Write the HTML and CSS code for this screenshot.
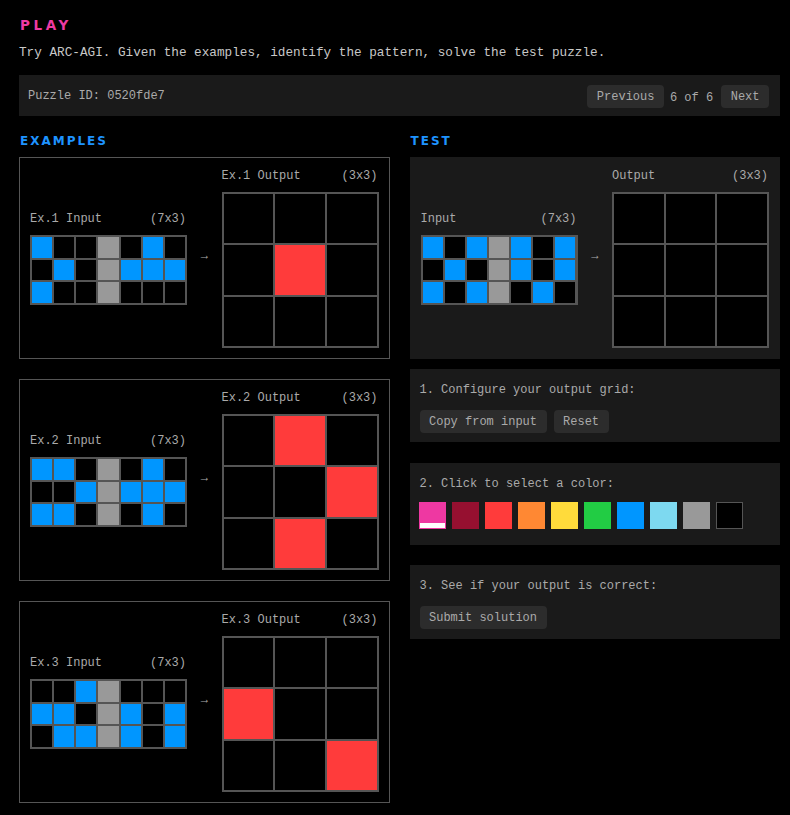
FILE: index.html
```html
<!DOCTYPE html>
<html>
<head>
<meta charset="utf-8">
<link rel="stylesheet" href="styles.css">
</head>
<body>
<div class="page">
  <h1 class="title">PLAY</h1>
  <p class="intro">Try ARC-AGI. Given the examples, identify the pattern, solve the test puzzle.</p>
  <div class="bar">
    <span class="pid">Puzzle ID: 0520fde7</span>
    <div class="nav">
      <button class="btn">Previous</button>
      <span class="count">6 of 6</span>
      <button class="btn">Next</button>
    </div>
  </div>
  <div class="cols">
    <section class="col">
      <h2 class="sec">EXAMPLES</h2>
      <div class="pair">
        <div class="block">
          <div class="lbl"><span>Ex.1 Input</span><span>(7x3)</span></div>
          <div class="grid g7">
            <i class="c1"></i><i></i><i></i><i class="c5"></i><i></i><i class="c1"></i><i></i>
            <i></i><i class="c1"></i><i></i><i class="c5"></i><i class="c1"></i><i class="c1"></i><i class="c1"></i>
            <i class="c1"></i><i></i><i></i><i class="c5"></i><i></i><i></i><i></i>
          </div>
        </div>
        <div class="arrow">→</div>
        <div class="block">
          <div class="lbl"><span>Ex.1 Output</span><span>(3x3)</span></div>
          <div class="grid g3">
            <i></i><i></i><i></i>
            <i></i><i class="c2"></i><i></i>
            <i></i><i></i><i></i>
          </div>
        </div>
      </div>
      <div class="pair">
        <div class="block">
          <div class="lbl"><span>Ex.2 Input</span><span>(7x3)</span></div>
          <div class="grid g7">
            <i class="c1"></i><i class="c1"></i><i></i><i class="c5"></i><i></i><i class="c1"></i><i></i>
            <i></i><i></i><i class="c1"></i><i class="c5"></i><i class="c1"></i><i class="c1"></i><i class="c1"></i>
            <i class="c1"></i><i class="c1"></i><i></i><i class="c5"></i><i></i><i class="c1"></i><i></i>
          </div>
        </div>
        <div class="arrow">→</div>
        <div class="block">
          <div class="lbl"><span>Ex.2 Output</span><span>(3x3)</span></div>
          <div class="grid g3">
            <i></i><i class="c2"></i><i></i>
            <i></i><i></i><i class="c2"></i>
            <i></i><i class="c2"></i><i></i>
          </div>
        </div>
      </div>
      <div class="pair">
        <div class="block">
          <div class="lbl"><span>Ex.3 Input</span><span>(7x3)</span></div>
          <div class="grid g7">
            <i></i><i></i><i class="c1"></i><i class="c5"></i><i></i><i></i><i></i>
            <i class="c1"></i><i class="c1"></i><i></i><i class="c5"></i><i class="c1"></i><i></i><i class="c1"></i>
            <i></i><i class="c1"></i><i class="c1"></i><i class="c5"></i><i class="c1"></i><i></i><i class="c1"></i>
          </div>
        </div>
        <div class="arrow">→</div>
        <div class="block">
          <div class="lbl"><span>Ex.3 Output</span><span>(3x3)</span></div>
          <div class="grid g3">
            <i></i><i></i><i></i>
            <i class="c2"></i><i></i><i></i>
            <i></i><i></i><i class="c2"></i>
          </div>
        </div>
      </div>
    </section>
    <section class="col">
      <h2 class="sec">TEST</h2>
      <div class="pair test">
        <div class="block">
          <div class="lbl"><span>Input</span><span>(7x3)</span></div>
          <div class="grid g7">
            <i class="c1"></i><i></i><i class="c1"></i><i class="c5"></i><i class="c1"></i><i></i><i class="c1"></i>
            <i></i><i class="c1"></i><i></i><i class="c5"></i><i class="c1"></i><i></i><i class="c1"></i>
            <i class="c1"></i><i></i><i class="c1"></i><i class="c5"></i><i></i><i class="c1"></i><i></i>
          </div>
        </div>
        <div class="arrow">→</div>
        <div class="block">
          <div class="lbl"><span>Output</span><span>(3x3)</span></div>
          <div class="grid g3">
            <i></i><i></i><i></i>
            <i></i><i></i><i></i>
            <i></i><i></i><i></i>
          </div>
        </div>
      </div>
      <div class="panel">
        <p class="step">1. Configure your output grid:</p>
        <div class="btns">
          <button class="btn">Copy from input</button>
          <button class="btn">Reset</button>
        </div>
      </div>
      <div class="panel p2">
        <p class="step">2. Click to select a color:</p>
        <div class="swatches">
          <span class="sw s6 sel"></span>
          <span class="sw s9"></span>
          <span class="sw s2"></span>
          <span class="sw s7"></span>
          <span class="sw s4"></span>
          <span class="sw s3"></span>
          <span class="sw s1"></span>
          <span class="sw s8"></span>
          <span class="sw s5"></span>
          <span class="sw s0"></span>
        </div>
      </div>
      <div class="panel p3">
        <p class="step">3. See if your output is correct:</p>
        <div class="btns">
          <button class="btn">Submit solution</button>
        </div>
      </div>
    </section>
  </div>
</div>
</body>
</html>
```
FILE: styles.css
```css
* { box-sizing: border-box; }
html, body { margin: 0; padding: 0; background: #000; }
body {
  font-family: "Liberation Mono", "DejaVu Sans Mono", monospace;
  color: #bbb;
  font-size: 12px;
}
.page {
  width: 761px;
  margin-left: 19px;
  padding-top: 12px;
}
.title {
  margin: 0;
  font-family: "DejaVu Sans", sans-serif;
  font-weight: bold;
  font-size: 13.5px;
  line-height: 26px;
  letter-spacing: 3.6px;
  color: #ee3aa3;
  padding-left: 1px;
}
.intro {
  margin: 5px 0 0;
  font-size: 12.7px;
  line-height: 20px;
  color: #c8c8c8;
}
.bar {
  margin-top: 12px;
  background: #1a1a1a;
  height: 41px;
  padding: 0 11px 0 9px;
  display: flex;
  align-items: center;
  justify-content: space-between;
}
.pid { color: #aaa; }
.nav { display: flex; align-items: center; gap: 6px; padding-top: 2px; }
.count { color: #aaa; margin-right: 2px; padding-top: 2px; }
.btn {
  font-family: inherit;
  font-size: 12px;
  color: #aaa;
  background: #2c2c2c;
  border: 0;
  border-radius: 4px;
  height: 23px;
  line-height: 19px;
  padding: 3px 9.5px 1px;
}
.cols {
  display: grid;
  grid-template-columns: 1fr 1fr;
  column-gap: 20px;
}
.sec {
  margin: 15px 0 6px;
  font-family: "DejaVu Sans", sans-serif;
  font-weight: bold;
  font-size: 12px;
  line-height: 20px;
  letter-spacing: 2px;
  color: #1e93ff;
  padding-left: 1px;
}
.pair {
  border: 1px solid #555;
  padding: 10px;
  height: 202px;
  display: flex;
  align-items: center;
  margin-bottom: 20px;
}
.pair.test {
  background: #1a1a1a;
  border-color: #1a1a1a;
  margin-bottom: 10px;
}
.block { width: 157px; flex: none; }
.arrow {
  flex: 1;
  text-align: center;
  font-size: 12px;
  color: #aaa;
  margin-top: -4px;
}
.lbl {
  display: flex;
  justify-content: space-between;
  line-height: 16px;
  margin-bottom: 8px;
  padding-top: 2px;
  margin-top: -2px;
  color: #aaa;
  padding-right: 1px;
}
.grid {
  display: grid;
  gap: 2px;
  padding: 2px;
  background: #555;
}
.grid i { display: block; background: #000; }
.g7 { grid-template-columns: repeat(7, 1fr); grid-auto-rows: 20.5px; width: 157px; }
.g3 { grid-template-columns: repeat(3, 1fr); grid-auto-rows: 49.5px; width: 157px; }
.grid i.c1 { background: #0096ff; }
.grid i.c2 { background: #ff3b3b; }
.grid i.c5 { background: #999; }
.panel {
  background: #1a1a1a;
  padding: 10px 10px 9px;
}
.panel.p2 { margin-top: 21px; padding-bottom: 16px; }
.panel.p3 { margin-top: 20px; padding-bottom: 10px; }
.step { margin: 0; line-height: 20px; color: #aaa; padding-top: 1px; margin-bottom: -1px; }
.btns { display: flex; gap: 7px; margin-top: 11px; }
.swatches { display: flex; gap: 6px; margin-top: 9px; margin-left: -1px; }
.sw { width: 27px; height: 27px; display: block; }
.s0 { background: #000; border: 1px solid #555; }
.s1 { background: #0096ff; }
.s2 { background: #ff3b3b; }
.s3 { background: #22cc44; }
.s4 { background: #ffdb3b; }
.s5 { background: #999; }
.s6 { background: #ee38a2; }
.s7 { background: #ff8833; }
.s8 { background: #7dd9f0; }
.s9 { background: #961030; }
.sel { border: 1px solid #ee38a2; box-shadow: inset 0 -5px 0 #fff; }
```
